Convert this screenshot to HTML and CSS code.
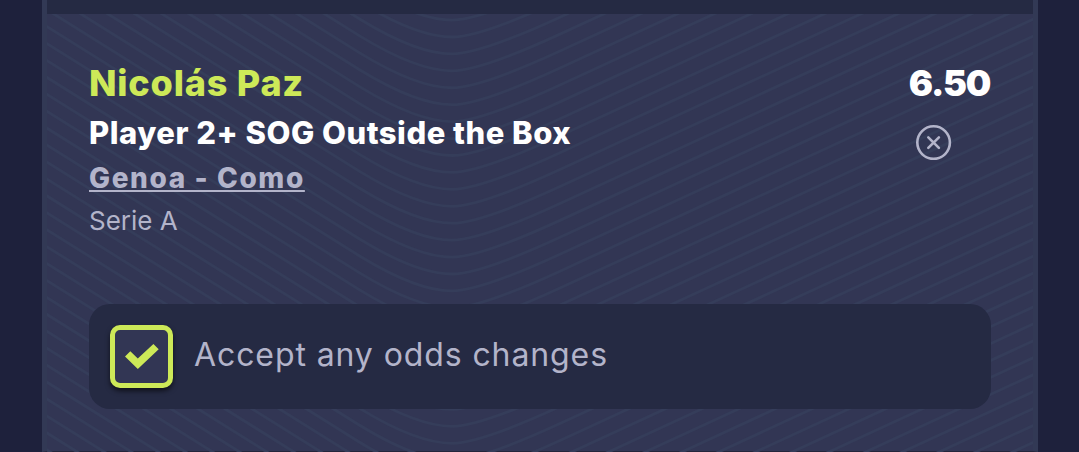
FILE: index.html
```
<!DOCTYPE html>
<html lang="en">
<head>
    <meta charset="UTF-8">
    <meta name="viewport" content="width=device-width, initial-scale=1.0">
    <title>Betslip</title>
    <link rel="stylesheet" href="styles.css">
</head>
<body>
    <div class="betslip">
        <svg class="waves" viewBox="0 0 986 438" aria-hidden="true">
            <g id="waves"></g>
        </svg>
        <div class="betslip-header"></div>
        <div class="selection">
            <div class="selection-info">
                <div class="outcome"><span>Nicolás Paz</span></div>
                <div class="market"><span>Player 2+ SOG Outside the Box</span></div>
                <div class="event"><a class="event-link">Genoa - Como</a></div>
                <div class="league"><span>Serie A</span></div>
            </div>
            <div class="selection-side">
                <div class="odds"><span>6.50</span></div>
                <svg class="remove" viewBox="0 0 36 36">
                    <circle cx="17.6" cy="18.6" r="16.3"/>
                    <path d="M12.3 13.3L22.9 23.9M22.9 13.3L12.3 23.9"/>
                </svg>
            </div>
        </div>
        <label class="accept">
            <span class="checkbox">
                <svg viewBox="0 0 34 26">
                    <path d="M0 12.5L5.3 7.2L12.8 14.6L28.4 0L33.7 5.2L12.8 25Z"/>
                </svg>
            </span>
            <span class="accept-text">Accept any odds changes</span>
        </label>
    </div>

    <script>
        const waves = document.getElementById('waves');
        const step = 16.93;
        let lines = '';

        // Same wave repeated down the panel
        for (let i = -15; i < 26; i++) {
            lines += `<path transform="translate(0 ${(i * step).toFixed(2)})" d="M-5 26.5L313 225.3C351 248.5 382 260 405 260C423 260 460 247.7 513 223.3L991 3"/>`;
        }
        waves.innerHTML = lines;
    </script>
</body>
</html>
```
FILE: styles.css
```
* {
    box-sizing: border-box;
}
body {
    margin: 0;
    height: 452px;
    overflow: hidden;
    background-color: #1e213c;
    font-family: Inter, "Open Sans", sans-serif;
}
.betslip {
    position: relative;
    width: 996px;
    height: 452px;
    margin-left: 42px;
    border: 5px solid #323955;
    border-top: none;
    border-bottom: 1px solid #24263c;
    background-color: #323654;
}
.waves {
    position: absolute;
    top: 14px;
    left: 0;
    width: 986px;
    height: 438px;
    fill: none;
    stroke: #353d5a;
    stroke-width: 2.8;
}
.betslip-header {
    height: 14px;
    background-color: #252a43;
}
.selection {
    position: relative;
    display: flex;
    justify-content: space-between;
    height: 290px;
    padding: 44px 42px 0;
}
.outcome {
    font-size: 36px;
    line-height: 50px;
    font-weight: 800;
    letter-spacing: 0.8px;
    color: #cde958;
}
.market {
    font-size: 31px;
    line-height: 50px;
    font-weight: 800;
    letter-spacing: 0.5px;
    color: #fff;
}
.event {
    font-size: 28px;
    line-height: 41px;
    font-weight: 800;
    letter-spacing: 1.6px;
    color: #b3b4ca;
}
.event-link {
    text-decoration: underline;
    text-decoration-thickness: 2px;
    text-underline-offset: 2px;
    text-decoration-skip-ink: none;
}
.league {
    font-size: 26px;
    line-height: 43px;
    color: #b3b4ca;
}
.selection-side {
    display: flex;
    flex-direction: column;
    align-items: flex-end;
}
.odds {
    padding-right: 1px;
    font-size: 36px;
    line-height: 50px;
    font-weight: 900;
    letter-spacing: -1.3px;
    color: #fff;
}
.remove {
    width: 36px;
    height: 36px;
    margin: 16px 39px 0 0;
    fill: none;
    stroke: #b3b4ca;
    stroke-width: 2.6;
    stroke-linecap: round;
}
.accept {
    position: relative;
    display: flex;
    align-items: center;
    height: 105px;
    margin: 0 42px;
    padding: 0 21px;
    gap: 21px;
    border-radius: 21px;
    background-color: #252a43;
}
.checkbox {
    display: flex;
    align-items: center;
    justify-content: center;
    width: 63px;
    height: 63px;
    border: 5px solid #cde958;
    border-radius: 10px;
    background-color: #323654;
    box-shadow: 0 3px 5px rgba(0, 0, 0, 0.6);
}
.checkbox svg {
    width: 34px;
    height: 26px;
    fill: #cde958;
}
.accept-text {
    padding-bottom: 3px;
    font-size: 32px;
    line-height: 42px;
    letter-spacing: 0.9px;
    color: #b3b4ca;
}
```
